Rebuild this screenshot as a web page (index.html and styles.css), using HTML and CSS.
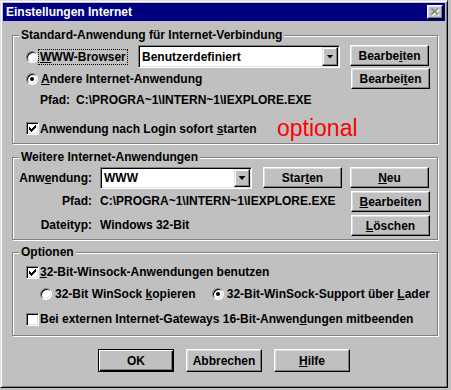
FILE: index.html
```html
<!DOCTYPE html>
<html lang="de">
<head>
    <meta charset="UTF-8">
    <title>Einstellungen Internet</title>
    <link rel="stylesheet" href="styles.css">
</head>
<body>
    <div class="window">
        <div class="titlebar">
            <span class="title">Einstellungen Internet</span>
            <span class="close">
                <svg width="9" height="8" viewBox="0 0 9 8">
                    <path d="M1.5 1.5 L8 7.5 M8 1.5 L1.5 7.5" stroke="#fff" stroke-width="1.6"/>
                    <path d="M0.5 0.5 L7 6.5 M7 0.5 L0.5 6.5" stroke="#808080" stroke-width="1.6"/>
                </svg>
            </span>
        </div>

        <div class="content">
            <fieldset class="group group-default">
                <legend>Standard-Anwendung für Internet-Verbindung</legend>
                <div class="row row-browser">
                    <span class="choice choice-browser">
                        <span class="radio"></span>
                        <span class="focus"><u>W</u>WW-Browser</span>
                    </span>
                    <div class="combo combo-browser">
                        <span class="combo-value">Benutzerdefiniert</span>
                        <span class="combo-arrow"></span>
                    </div>
                    <button class="btn btn-edit">Bearbe<u>i</u>ten</button>
                </div>
                <div class="row row-other">
                    <span class="choice">
                        <span class="radio checked"></span>
                        <span class="choice-text"><u>A</u>ndere Internet-Anwendung</span>
                    </span>
                    <button class="btn btn-right">Bearbei<u>t</u>en</button>
                </div>
                <div class="row row-path">
                    <span class="path-label">Pfad:</span>
                    <span>C:\PROGRA~1\INTERN~1\IEXPLORE.EXE</span>
                </div>
                <div class="row row-login">
                    <span class="choice choice-login">
                        <span class="checkbox">
                            <svg width="7" height="7" viewBox="0 0 7 7" shape-rendering="crispEdges">
                                <rect x="6" y="0" width="1" height="1"/>
                                <rect x="5" y="1" width="2" height="1"/>
                                <rect x="0" y="2" width="1" height="1"/>
                                <rect x="4" y="2" width="3" height="1"/>
                                <rect x="0" y="3" width="2" height="1"/>
                                <rect x="3" y="3" width="3" height="1"/>
                                <rect x="0" y="4" width="5" height="1"/>
                                <rect x="1" y="5" width="3" height="1"/>
                                <rect x="2" y="6" width="1" height="1"/>
                            </svg>
                        </span>
                        <span>Anwendung nach Login sofort <u>s</u>tarten</span>
                    </span>
                    <span class="optional">optional</span>
                </div>
            </fieldset>

            <fieldset class="group group-more">
                <legend>Weitere Internet-Anwendungen</legend>
                <div class="row row-app">
                    <span class="field-label">Anw<u>e</u>ndung:</span>
                    <div class="combo combo-app">
                        <span class="combo-value">WWW</span>
                        <span class="combo-arrow"></span>
                    </div>
                    <button class="btn btn-start">Star<u>t</u>en</button>
                    <button class="btn btn-new"><u>N</u>eu</button>
                </div>
                <div class="row row-info">
                    <span class="field-label">Pfad:</span>
                    <span class="field-value">C:\PROGRA~1\INTERN~1\IEXPLORE.EXE</span>
                    <button class="btn"><u>B</u>earbeiten</button>
                </div>
                <div class="row row-info">
                    <span class="field-label">Dateityp:</span>
                    <span class="field-value">Windows 32-Bit</span>
                    <button class="btn"><u>L</u>öschen</button>
                </div>
            </fieldset>

            <fieldset class="group group-options">
                <legend>Optionen</legend>
                <div class="row row-winsock">
                    <span class="choice">
                        <span class="checkbox">
                            <svg width="7" height="7" viewBox="0 0 7 7" shape-rendering="crispEdges">
                                <rect x="6" y="0" width="1" height="1"/>
                                <rect x="5" y="1" width="2" height="1"/>
                                <rect x="0" y="2" width="1" height="1"/>
                                <rect x="4" y="2" width="3" height="1"/>
                                <rect x="0" y="3" width="2" height="1"/>
                                <rect x="3" y="3" width="3" height="1"/>
                                <rect x="0" y="4" width="5" height="1"/>
                                <rect x="1" y="5" width="3" height="1"/>
                                <rect x="2" y="6" width="1" height="1"/>
                            </svg>
                        </span>
                        <span><u>3</u>2-Bit-Winsock-Anwendungen benutzen</span>
                    </span>
                </div>
                <div class="row row-loader">
                    <span class="choice choice-copy">
                        <span class="radio"></span>
                        <span class="choice-text">32-Bit WinSock <u>k</u>opieren</span>
                    </span>
                    <span class="choice">
                        <span class="radio checked"></span>
                        <span class="choice-text">32-Bit-WinSock-Support über <u>L</u>ader</span>
                    </span>
                </div>
                <div class="row row-gateway">
                    <span class="choice">
                        <span class="checkbox"></span>
                        <span>Bei externen Internet-Gateways 16-Bit-Anwen<u>d</u>ungen mitbeenden</span>
                    </span>
                </div>
            </fieldset>
        </div>

        <div class="actions">
            <button class="btn btn-action btn-default">OK</button>
            <button class="btn btn-action">Abbrechen</button>
            <button class="btn btn-action"><u>H</u>ilfe</button>
        </div>
    </div>
</body>
</html>
```

FILE: styles.css
```css
body {
    margin: 0;
    background-color: #c0c0c0;
    font-family: "Liberation Sans", Arial, sans-serif;
    font-size: 12px;
    font-weight: bold;
    color: #000;
    white-space: nowrap;
}

.window {
    width: 448px;
    height: 388px;
    box-sizing: border-box;
    padding: 2px;
    background-color: #c0c0c0;
    border: 1px solid;
    border-color: #dfdfdf #000 #000 #dfdfdf;
    box-shadow: inset 1px 1px #fff, inset -1px -1px #808080;
}

.titlebar {
    height: 18px;
    display: flex;
    align-items: center;
    justify-content: space-between;
    padding: 0 2px 0 3px;
    background-color: #000080;
    color: #fff;
}

.title {
    line-height: 18px;
}

.close {
    width: 16px;
    height: 14px;
    box-sizing: border-box;
    display: flex;
    align-items: center;
    justify-content: center;
    background-color: #c0c0c0;
    border: 1px solid;
    border-color: #fff #000 #000 #fff;
    box-shadow: inset -1px -1px #808080, inset 1px 1px #dfdfdf;
}

.content {
    padding: 7px 7px 0 9px;
}

/* group boxes */
.group {
    margin: 0;
    padding: 0 0 1px;
    min-width: 0;
    border: 1px solid #808080;
    box-shadow: inset 1px 1px #fff, 1px 1px #fff;
}

.group legend {
    margin-left: 6px;
    padding: 0 2px;
    line-height: 14px;
    background-color: #c0c0c0;
}

.group-more {
    margin-top: 6px;
    padding-bottom: 2px;
}

.group-options {
    margin-top: 5px;
    padding-bottom: 4px;
}

.row {
    display: flex;
    align-items: center;
    padding: 0 7px 0 13px;
}

.choice {
    display: flex;
    align-items: center;
}

.choice-text {
    margin-left: 3px;
}

/* first group */
.row-browser {
    margin-top: 3px;
    height: 23px;
}

.choice-browser {
    width: 112px;
}

.focus {
    margin-left: 0;
    padding: 0 1px;
    line-height: 14px;
    border: 1px dotted #000;
}

.btn-edit {
    margin-left: 10px;
}

.row-other {
    height: 21px;
}

.btn-right {
    margin-left: auto;
}

.row-path {
    height: 22px;
    padding-left: 27px;
}

.path-label {
    width: 36px;
}

.row-login {
    margin-top: 4px;
    height: 27px;
}

.choice-login {
    width: 251px;
}

.optional {
    font-weight: normal;
    font-size: 23px;
    line-height: 27px;
    color: #ff0000;
}

/* second group */
.group-more .row {
    padding-left: 0;
}

.row-app {
    margin-top: 3px;
    height: 22px;
}

.field-label {
    width: 79px;
    margin-right: 8px;
    text-align: right;
}

.field-value {
    flex: 1;
}

.btn-start {
    margin-left: 11px;
}

.btn-new {
    margin-left: 8px;
}

.row-info {
    height: 24px;
}

.row-info .btn {
    margin-top: 2px;
}

/* third group */
.row-winsock {
    margin-top: 2px;
    height: 22px;
}

.row-loader {
    height: 22px;
    padding-left: 27px;
}

.choice-copy {
    width: 172px;
}

.row-gateway {
    margin-top: 2px;
    height: 24px;
}

/* controls */
.btn {
    flex: none;
    align-self: flex-start;
    width: 79px;
    height: 21px;
    box-sizing: border-box;
    padding: 0;
    font: inherit;
    color: #000;
    background-color: #c0c0c0;
    border: 1px solid;
    border-color: #fff #000 #000 #fff;
    box-shadow: inset -1px -1px #808080, inset 1px 1px #dfdfdf;
}

.combo {
    flex: none;
    display: flex;
    align-items: stretch;
    box-sizing: border-box;
    padding: 1px;
    background-color: #fff;
    border: 1px solid;
    border-color: #808080 #fff #fff #808080;
    box-shadow: inset 1px 1px #000, inset -1px -1px #dfdfdf;
}

.combo-browser {
    width: 202px;
    height: 23px;
}

.combo-app {
    width: 152px;
    height: 22px;
}

.combo-value {
    flex: 1;
    display: flex;
    align-items: center;
    padding-left: 2px;
}

.combo-arrow {
    width: 16px;
    box-sizing: border-box;
    display: flex;
    align-items: center;
    justify-content: center;
    background-color: #c0c0c0;
    border: 1px solid;
    border-color: #dfdfdf #000 #000 #dfdfdf;
    box-shadow: inset -1px -1px #808080, inset 1px 1px #fff;
}

.combo-arrow::after {
    content: "";
    width: 7px;
    height: 4px;
    background-color: #000;
    clip-path: polygon(0 0, 100% 0, 50% 100%);
}

.radio {
    flex: none;
    width: 12px;
    height: 12px;
    box-sizing: border-box;
    display: flex;
    align-items: center;
    justify-content: center;
    border-radius: 50%;
    background-color: #fff;
    border: 1px solid;
    border-color: #808080 #fff #fff #808080;
    box-shadow: inset 1px 1px #000, inset -1px -1px #dfdfdf;
}

.radio.checked::after {
    content: "";
    width: 4px;
    height: 4px;
    border-radius: 50%;
    background-color: #000;
}

.checkbox {
    flex: none;
    width: 13px;
    height: 13px;
    margin-right: 1px;
    box-sizing: border-box;
    display: flex;
    align-items: center;
    justify-content: center;
    background-color: #fff;
    border: 1px solid;
    border-color: #808080 #fff #fff #808080;
    box-shadow: inset 1px 1px #000, inset -1px -1px #dfdfdf;
}

/* dialog buttons */
.actions {
    display: flex;
    justify-content: center;
    gap: 12px;
    margin-top: 13px;
}

.btn-action {
    width: 76px;
    height: 23px;
}

.btn-default {
    border-color: #000;
    box-shadow: inset 1px 1px #fff, inset -1px -1px #000, inset -2px -2px #808080;
}
```
